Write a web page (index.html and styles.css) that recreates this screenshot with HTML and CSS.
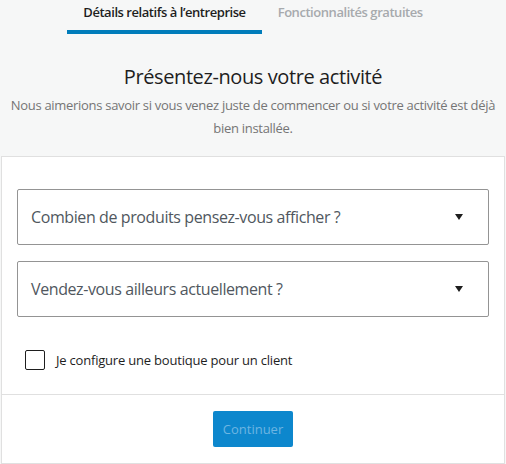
FILE: index.html
```html
<!DOCTYPE html>
<html lang="fr">
<head>
<meta charset="utf-8">
<link rel="stylesheet" href="styles.css">
</head>
<body>
<nav class="tabs">
  <div class="tab active">Détails relatifs à l’entreprise</div>
  <div class="tab">Fonctionnalités gratuites</div>
</nav>
<header class="intro">
  <h1 class="title">Présentez-nous votre activité</h1>
  <p class="subtitle">Nous aimerions savoir si vous venez juste de commencer ou si votre activité est déjà bien installée.</p>
</header>
<section class="card">
  <div class="card-body">
    <div class="select">
      <span class="select-label">Combien de produits pensez-vous afficher ?</span>
      <span class="arrow"></span>
    </div>
    <div class="select">
      <span class="select-label">Vendez-vous ailleurs actuellement ?</span>
      <span class="arrow"></span>
    </div>
    <label class="check">
      <span class="box"></span>
      <span class="check-label">Je configure une boutique pour un client</span>
    </label>
  </div>
  <div class="card-footer">
    <button class="btn">Continuer</button>
  </div>
</section>
</body>
</html>
```
FILE: styles.css
```css
* { box-sizing: border-box; }
html, body { margin: 0; padding: 0; }
body {
  background: #f6f7f7;
  font-family: "Open Sans", "Noto Sans", sans-serif;
  color: #1e1e1e;
  width: 506px;
  height: 464px;
  overflow: hidden;
}
.tabs {
  display: flex;
  justify-content: center;
  height: 34px;
}
.tab {
  padding: 2px 16px 0;
  font-size: 13px;
  font-weight: 600;
  color: #a7aaad;
  line-height: 20px;
  border-bottom: 4px solid transparent;
  letter-spacing: -0.45px;
}
.tab.active {
  color: #1e1e1e;
  border-bottom-color: #007cba;
}
.intro {
  text-align: center;
  padding-top: 30px;
}
.title {
  margin: 0;
  font-size: 20px;
  font-weight: 400;
  line-height: 26px;
  color: #1e1e1e;
  letter-spacing: -0.4px;
}
.subtitle {
  margin: 4px auto 0;
  width: 490px;
  font-size: 13px;
  line-height: 23px;
  color: #757575;
  letter-spacing: -0.3px;
}
.card {
  margin: 16px 1px 0;
  background: #fff;
  border: 1px solid #e0e0e0;
}
.card-body {
  padding: 32px 15px 24px;
  display: flex;
  flex-direction: column;
  gap: 16px;
}
.select {
  height: 56px;
  border: 1px solid #949494;
  border-radius: 2px;
  display: flex;
  align-items: center;
  justify-content: space-between;
  padding: 0 25px 0 13px;
}
.select-label {
  font-size: 16px;
  color: #50575e;
  letter-spacing: -0.4px;
}
.arrow {
  width: 0;
  height: 0;
  border-left: 4px solid transparent;
  border-right: 4px solid transparent;
  border-top: 6px solid #1e1e1e;
}
.check {
  margin-top: 17px;
  display: flex;
  align-items: center;
  gap: 11px;
  padding-left: 8px;
}
.box {
  width: 20px;
  height: 20px;
  border: 1px solid #1e1e1e;
  border-radius: 2px;
}
.check-label {
  font-size: 13px;
  color: #1e1e1e;
  letter-spacing: -0.2px;
}
.card-footer {
  border-top: 1px solid #e0e0e0;
  padding: 16px 0;
  display: flex;
  justify-content: center;
}
.btn {
  width: 80px;
  height: 36px;
  border: none;
  border-radius: 2px;
  background: #0d87cd;
  color: #6db5e2;
  font-family: inherit;
  font-size: 13px;
  padding: 0;
}
```
